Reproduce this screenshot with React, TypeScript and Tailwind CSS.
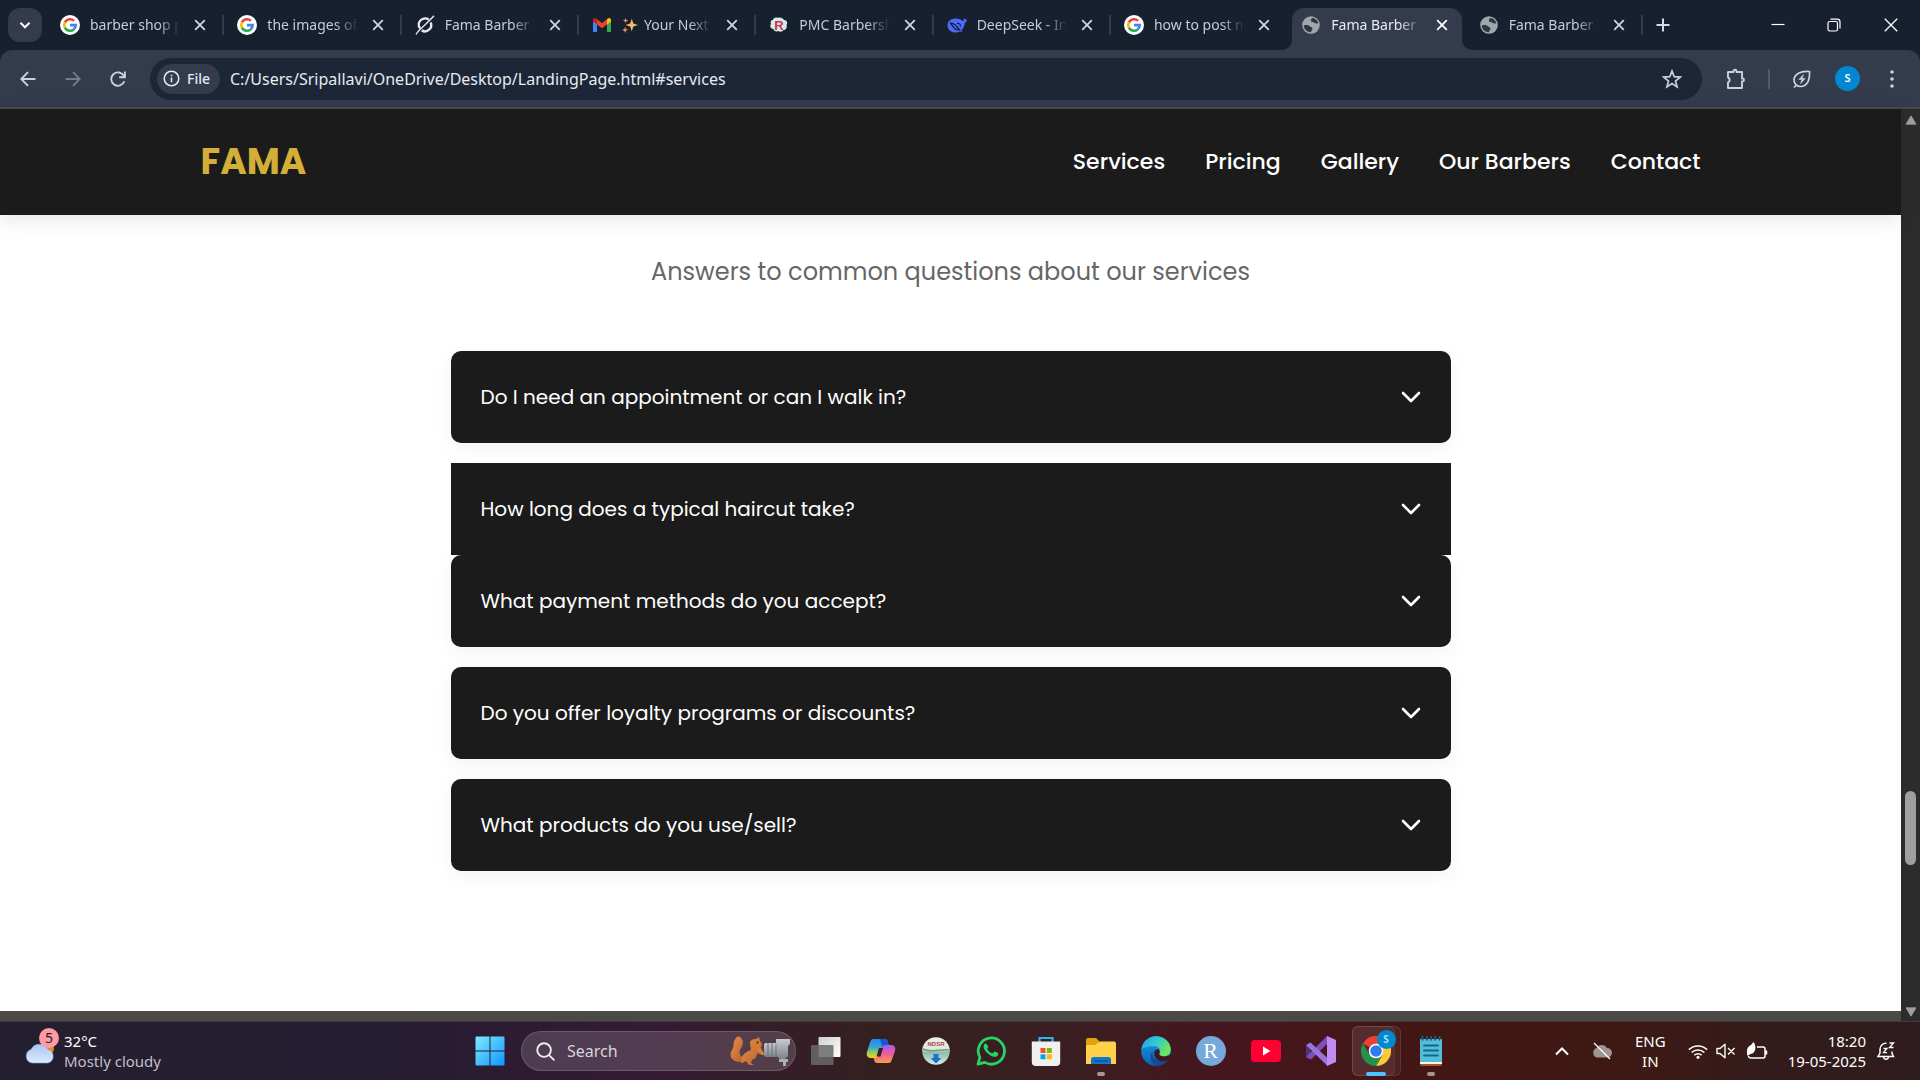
import React, { useState } from "react";

type IconProps = { className?: string };

const GoogleIcon = () => (
  <svg viewBox="0 0 20 20" className="size-5">
    <circle cx="10" cy="10" r="10" fill="#fff" />
    <g fill="none" strokeWidth="2.6">
      <path d="M4.9 7.4A5.7 5.7 0 0 1 14 5.9" stroke="#ea4335" />
      <path d="M4.9 12.6a5.7 5.7 0 0 1 0-5.2" stroke="#fbbc05" />
      <path d="M13.7 14.4a5.7 5.7 0 0 1-8.8-1.8" stroke="#34a853" />
      <path d="M10 10.1h5.7a5.7 5.7 0 0 1-2 4.3" stroke="#4285f4" />
    </g>
  </svg>
);

const SlashCircleIcon = () => (
  <svg viewBox="0 0 20 20" className="size-5" fill="none" stroke="#e8eaf0">
    <path d="M13.8 4.6A6.3 6.3 0 0 0 5 13.4" strokeWidth="2.4" />
    <path d="M15.7 7.5a6.3 6.3 0 0 1-9 7.9" strokeWidth="2.4" />
    <path d="M1 19.3C4 14 12 9 19 .8" strokeWidth="1.4" />
  </svg>
);

const GmailIcon = () => (
  <svg viewBox="0 0 20 20" className="size-5">
    <path d="M1 5v11.2c0 .5.4.9.9.9H5V8.6z" fill="#4285f4" />
    <path d="M19 5v11.2c0 .5-.4.9-.9.9H15V8.6z" fill="#34a853" />
    <path d="M15 4.2v5.2l4-3V5c0-2-2-2.7-3.3-1.5z" fill="#fbbc04" />
    <path d="M5 4.2v5.2l5 3.9 5-3.9V4.2L10 8z" fill="#ea4335" />
    <path d="M1 5v1.4l4 3V4.2l-.7-.7C3 2.3 1 3.2 1 5z" fill="#c5221f" />
  </svg>
);

const SparkleIcon = () => (
  <svg viewBox="0 0 18 18" className="size-4 shrink-0">
    <path d="M11 2l1.8 5.2L18 9l-5.2 1.8L11 16l-1.8-5.2L4 9l5.200-1.800z" fill="#fbb866" />
    <path d="M4 1l.8 2.200L7 4l-2.200.8L4 7l-.8-2.200L1 4l2.200-.8zM3.500 11l.9 2.600L7 14.500l-2.600.9L3.500 18l-.9-2.600L0 14.500l2.600-.9z" fill="#f0906a" />
  </svg>
);

const PmcIcon = () => (
  <svg viewBox="0 0 20 20" className="size-5">
    <path d="M4 5c0-2 3-3 5-2 2-1 5 0 6 2 3 0 4 3 2.500 5 1 3-1 5-3 5-1 2-4 2-5 1-2 1-5 0-5-2-3 0-4-3-2.500-5C1 7 2 5 4 5z" fill="#d3ece8" />
    <text x="10" y="15" textAnchor="middle" fontFamily="Liberation Sans" fontWeight="700" fontSize="13" fill="#d3304a">R</text>
  </svg>
);

const DeepSeekIcon = () => (
  <svg viewBox="0 0 20 20" className="size-5">
    <path d="M19.600 4.300c-1.600.4-2.200-.2-2.900-1.300-.4 1.600.1 2.700.2 3.300-1.300-.2-2.600-1.600-4-2.100-2.800-1.200-8-1.400-11 1.900C-.4 9 .4 13.600 3.200 15.800c2.700 2.200 6.800 2.300 9.700.7l2.700.6c-.4-.6-.9-1-1.300-1.500 2.500-2.100 3.300-5.200 3.400-7.500 1.400-.3 2.200-1.800 1.900-3.800z" fill="#4d6bfe" />
    <path d="M3.500 8.200c4-.6 6.200 3.600 9.200 6.600-3 .7-4.600-.6-6-2.200C5.500 11 4.500 9.500 3.500 8.200zM10 8.500c2.300-.6 3.500.6 3.500 3" fill="none" stroke="#17202f" strokeWidth="1.300" />
  </svg>
);

const GlobeIcon = () => (
  <svg viewBox="0 0 20 20" className="size-5">
    <circle cx="10" cy="10" r="8.800" fill="#a1a6ad" />
    <path d="M11 3c3 0 5.500 2 6.300 5-1.300.8-3 .6-4-.2-1-.9-2.800-.3-3.300-1.500-.4-1.200.2-2.300 1-3.300z" fill="#2d3647" />
    <path d="M2.800 10.500c2-.8 4.700-.6 6 .8.8 1 2.500.8 2.700 2.200.2 1.300-1.200 1.700-1.500 3.700-3.800 0-7-2.700-7.200-6.700z" fill="#2d3647" />
  </svg>
);

const CloseIcon = ({ className }: IconProps) => (
  <svg viewBox="0 0 12 12" className={className} fill="none" stroke="currentColor" strokeWidth="1.800">
    <path d="M1.200 1.200l9.600 9.600M10.800 1.200l-9.600 9.600" />
  </svg>
);

const tabs = [
  { title: "barber shop p", icon: <GoogleIcon /> },
  { title: "the images of", icon: <GoogleIcon /> },
  { title: "Fama Barber S", icon: <SlashCircleIcon /> },
  { title: "Your Next", icon: <GmailIcon />, sparkle: true },
  { title: "PMC Barbersh", icon: <PmcIcon /> },
  { title: "DeepSeek - In", icon: <DeepSeekIcon /> },
  { title: "how to post m", icon: <GoogleIcon /> },
  { title: "Fama Barber S", icon: <GlobeIcon />, active: true },
  { title: "Fama Barber S", icon: <GlobeIcon /> },
];

function TabStrip() {
  return (
    <div className="flex h-[50px] bg-[#17202f]">
      <div className="w-[47px] shrink-0 pl-2 pt-2">
        <button aria-label="Search tabs" className="flex h-[34px] w-[34px] items-center justify-center rounded-xl bg-[#333b4c] text-white">
          <svg viewBox="0 0 12 12" className="size-3" fill="none" stroke="currentColor" strokeWidth="2"><path d="M1.500 3.800L6 8.300l4.500-4.500" /></svg>
        </button>
      </div>
      <div className="flex min-w-0 flex-1">
        {tabs.map((t, i) => (
          <div key={i} className="relative flex min-w-0 flex-1 items-center pl-[13px] pr-3">
            {t.active && (
              <div className="absolute inset-x-1 bottom-0 top-2 rounded-t-xl bg-[#333b4c]">
                <svg viewBox="0 0 10 10" className="absolute -left-2.5 bottom-0 size-2.5"><path d="M10 0v10H0A10 10 0 0 0 10 0z" fill="#333b4c" /></svg>
                <svg viewBox="0 0 10 10" className="absolute -right-2.5 bottom-0 size-2.5"><path d="M0 0v10h10A10 10 0 0 1 0 0z" fill="#333b4c" /></svg>
              </div>
            )}
            <span className="relative shrink-0">{t.icon}</span>
            <span className={`relative ml-2.5 flex min-w-0 flex-1 items-center gap-1.5 overflow-hidden whitespace-nowrap text-[14px] leading-5 [mask-image:linear-gradient(to_right,#000_75%,transparent)] ${t.active ? "text-[#e6eaf3]" : "text-[#c3cbdc]"}`}>
              {t.sparkle && <SparkleIcon />}
              {t.title}
            </span>
            <button aria-label={`Close ${t.title}`} className={`relative ml-2 flex size-6 shrink-0 items-center justify-center ${t.active ? "text-white" : "text-[#ced5e4]"}`}>
              <CloseIcon className="size-3" />
            </button>
            {i !== 6 && i !== 7 && <span className="absolute right-0 top-[15px] h-5 w-0.5 bg-[#333b4c]" />}
          </div>
        ))}
      </div>
      <div className="flex w-[277px] shrink-0 items-center justify-between text-white">
        <button aria-label="New tab" className="flex h-8 w-10 items-center justify-center text-[#d5dbe8]">
          <svg viewBox="0 0 14 14" className="size-3.5" stroke="currentColor" strokeWidth="2"><path d="M7 .5v13M.5 7h13" /></svg>
        </button>
        <div className="flex h-full">
          <button aria-label="Minimize" className="flex w-14 items-center justify-center">
            <svg viewBox="0 0 14 14" className="size-3.5" stroke="currentColor" strokeWidth="1.200"><path d="M.5 6.500h13" /></svg>
          </button>
          <button aria-label="Restore" className="flex w-14 items-center justify-center">
            <svg viewBox="0 0 14 14" className="size-3.5" fill="none" stroke="currentColor" strokeWidth="1.200"><rect x="1" y="3.500" width="9.500" height="9.500" rx="1.800" /><path d="M3.500 1.200h6.700a2.800 2.800 0 0 1 2.800 2.800v6.500" /></svg>
          </button>
          <button aria-label="Close window" className="flex w-[58px] items-center justify-center">
            <svg viewBox="0 0 14 14" className="size-3.5" fill="none" stroke="currentColor" strokeWidth="1.300"><path d="M.8.8l12.400 12.400M13.200.8L.8 13.200" /></svg>
          </button>
        </div>
      </div>
    </div>
  );
}

function Toolbar() {
  return (
    <div className="bg-[#17202f]">
      <div className="flex h-[59px] items-center rounded-t-xl border-b-2 border-[#454851] bg-[#333b4c] text-[#c9d1e3]">
        <div className="flex w-[150px] shrink-0 items-center pl-[5px]">
          <button aria-label="Back" className="flex h-8 w-[45px] items-center justify-center">
            <svg viewBox="0 0 16 16" className="size-4" fill="none" stroke="currentColor" strokeWidth="1.900"><path d="M15.500 8H1.500M8 1.200L1.300 8 8 14.800" /></svg>
          </button>
          <button aria-label="Forward" className="flex h-8 w-[45px] items-center justify-center text-[#737b8d]">
            <svg viewBox="0 0 16 16" className="size-4" fill="none" stroke="currentColor" strokeWidth="1.900"><path d="M.5 8h14M8 1.200L14.700 8 8 14.800" /></svg>
          </button>
          <button aria-label="Reload" className="flex h-8 w-[45px] items-center justify-center">
            <svg viewBox="0 0 16 16" className="size-4" fill="none" stroke="currentColor" strokeWidth="1.900"><path d="M14.300 10.300A6.700 6.700 0 1 1 14 5.200M14.900 .6v5.600H9.200" /></svg>
          </button>
        </div>
        <div className="flex h-[42px] min-w-0 flex-1 items-center rounded-full bg-[#1d2636] pl-[7px]">
          <button className="flex h-[30px] w-[63px] shrink-0 items-center gap-[7px] rounded-full bg-[#333b4c] pl-1.5 text-[14px] font-medium text-[#e6eaf3]">
            <svg viewBox="0 0 18 18" className="size-[17px]" fill="none" stroke="currentColor" strokeWidth="1.600"><circle cx="9" cy="9" r="7.700" /><path d="M9 8v5M9 5v1.700" /></svg>
            File
          </button>
          <input aria-label="Address" defaultValue="C:/Users/Sripallavi/OneDrive/Desktop/LandingPage.html#services" className="ml-2.5 min-w-0 flex-1 bg-transparent text-[16px] text-[#e6eaf3] outline-none" />
          <button aria-label="Bookmark this tab" className="mr-4 flex size-7 items-center justify-center">
            <svg viewBox="0 0 20 20" className="size-5" fill="none" stroke="currentColor" strokeWidth="1.700"><path d="M10 2l2.200 5.700 6 .4-4.700 3.900 1.600 5.900L10 14.600l-5.100 3.300L6.500 12 1.800 8.100l6-.4z" /></svg>
          </button>
        </div>
        <div className="flex w-[218px] shrink-0 items-center pl-5">
          <button aria-label="Extensions" className="flex size-7 items-center justify-center">
            <svg viewBox="0 0 22 22" className="size-[22px]" fill="none" stroke="currentColor" strokeWidth="1.900"><path d="M3 4h5.500V3.300a1.500 1.500 0 0 1 3 0V4H17v6.500h.5a1.500 1.500 0 0 1 0 3H17V20H3v-5.500a2.700 2.700 0 0 0 0-5z" strokeLinejoin="round" /></svg>
          </button>
          <span className="ml-[18px] h-5 w-0.5 bg-[#505a6e]" />
          <button aria-label="Energy saver" className="ml-[18px] flex size-7 items-center justify-center">
            <svg viewBox="0 0 20 20" className="size-5" fill="none" stroke="currentColor" strokeWidth="1.700"><path d="M17.500 2.500C9 1.500 2 5 2 11c0 3.500 3 6.500 6.500 6.500 6.500 0 9.500-6 9-15zM2 18.500l2.800-2.800" /><path d="M11.500 5.500l-4.700 5h3l-1.300 4.200 4.700-5.200h-3z" fill="currentColor" strokeWidth=".5" /></svg>
          </button>
          <button aria-label="Profile" className="ml-[19px] flex size-[25px] items-center justify-center rounded-full bg-[#0288d1] text-[11px] font-semibold text-white">S</button>
          <button aria-label="Menu" className="ml-[18px] flex size-7 items-center justify-center">
            <svg viewBox="0 0 4 20" className="h-5 w-1" fill="currentColor"><circle cx="2" cy="3" r="1.800" /><circle cx="2" cy="10" r="1.800" /><circle cx="2" cy="17" r="1.800" /></svg>
          </button>
        </div>
      </div>
    </div>
  );
}

const questions = [
  "Do I need an appointment or can I walk in?",
  "How long does a typical haircut take?",
  "What payment methods do you accept?",
  "Do you offer loyalty programs or discounts?",
  "What products do you use/sell?",
];

function Page() {
  const [selected, setSelected] = useState(1);
  return (
    <div className="min-w-0 flex-1 bg-white font-['Poppins','Inter',sans-serif]">
      <header className="relative flex h-[106px] items-center justify-center bg-[#1b1b1b] shadow-[0_5px_20px_rgba(0,0,0,0.1)]">
        <div className="flex w-full max-w-[1500px] items-center justify-between">
          <a href="#home" className="text-[36px] font-bold leading-10 text-[#d4af37]">FAMA</a>
          <nav className="flex gap-10 text-[22px] font-medium leading-8 text-white">
            {["Services", "Pricing", "Gallery", "Our Barbers", "Contact"].map((n) => (
              <a key={n} href={`#${n.toLowerCase().replace(" ", "-")}`}>{n}</a>
            ))}
          </nav>
        </div>
      </header>
      <main className="pt-10">
        <p className="text-center text-[24px] leading-[34px] text-[#666]">Answers to common questions about our services</p>
        <div className="mx-auto mt-[62px] flex w-full max-w-[1000px] flex-col pb-[120px]">
          {questions.map((q, i) => (
            <button
              key={q}
              onClick={() => setSelected(i)}
              className={`flex h-[92px] items-center justify-between bg-[#1b1b1b] px-[30px] text-left text-[20px] text-white ${selected === i ? "" : "mb-5 rounded-[10px] shadow-[0_5px_20px_rgba(0,0,0,0.05)]"}`}
            >
              {q}
              <svg viewBox="0 0 20 12" className="h-3 w-5" fill="none" stroke="currentColor" strokeWidth="2.600" strokeLinecap="round" strokeLinejoin="round"><path d="M2 2l8 8 8-8" /></svg>
            </button>
          ))}
        </div>
      </main>
    </div>
  );
}

function Scrollbar() {
  return (
    <div className="flex w-[19px] shrink-0 flex-col items-center bg-[#2c2c2c]">
      <svg viewBox="0 0 14 12" className="mt-1.5 h-2.5 w-3.5"><path d="M7 1l6 10H1z" fill="#9f9f9f" stroke="#9f9f9f" strokeLinejoin="round" /></svg>
      <span className="grow-[665]" />
      <span className="h-[74px] w-[11px] rounded-full bg-[#9f9f9f]" />
      <span className="grow-[142]" />
      <svg viewBox="0 0 14 12" className="mb-1 h-2.5 w-3.5"><path d="M7 11l6-10H1z" fill="#9f9f9f" stroke="#9f9f9f" strokeLinejoin="round" /></svg>
    </div>
  );
}

const Squirrel = () => (
  <svg viewBox="0 0 62 32" className="h-8 w-[62px]">
    <defs>
      <linearGradient id="fur" x1="0" y1="0" x2="1" y2="1"><stop offset="0" stopColor="#e8924a" /><stop offset="1" stopColor="#b9602b" /></linearGradient>
      <linearGradient id="metal" x1="0" y1="0" x2="0" y2="1"><stop offset="0" stopColor="#c7cad0" /><stop offset="1" stopColor="#7d8289" /></linearGradient>
    </defs>
    <path d="M12 27C4 27-1 22 3 15c3-4 0-7 4-12 1-2 4-2 5 0 4 4 1 9-1 12-1 3 0 6 3 8z" fill="url(#fur)" />
    <path d="M12 28c-1-7 4-11 10-13l-1-7c0-3 3-4 6-4l3-2 1 4c2 2 3 4 1 6l-3 2 5 4-1 2-5-2c0 4-2 6-5 7l-1 3 3 2h-5l-3-4c-2 1-3 2-5 2z" fill="url(#fur)" />
    <path d="M30 10l6 10h-3l-6-5z" fill="#d97a36" />
    <circle cx="28.500" cy="7.500" r=".9" fill="#3a1c10" />
    <rect x="35" y="8" width="14" height="14" rx="2" fill="url(#metal)" />
    <path d="M39 8v14M43 8v14M47 9v12" stroke="#686d75" />
    <path d="M47 4h14v5l-2 2v10l-3 3h-5l-3-3V11l-1-2z" fill="url(#metal)" />
    <path d="M50 24h9v3h-2v4h-3v-4h-4z" fill="#aab0b8" />
  </svg>
);

const WindowsIcon = () => (
  <svg viewBox="0 0 30 30" className="size-[30px]">
    <defs><linearGradient id="win" x1="0" y1="0" x2="1" y2="1"><stop offset="0" stopColor="#7cecff" /><stop offset="1" stopColor="#0f95ff" /></linearGradient></defs>
    <path d="M.5 1.500a1 1 0 0 1 1-1h13v14H.5zM15.500.5h13a1 1 0 0 1 1 1v13h-14zM.5 15.500h14v14h-13a1 1 0 0 1-1-1zM15.500 15.500h14v13a1 1 0 0 1-1 1h-13z" fill="url(#win)" />
  </svg>
);

const apps: { name: string; running?: boolean; active?: boolean; icon: React.ReactNode }[] = [
  { name: "Task View", icon: (
    <svg viewBox="0 0 30 30" className="size-[30px]"><defs><linearGradient id="tv" x1="0" y1="0" x2="1" y2="1"><stop offset="0" stopColor="#d0d0d0" /><stop offset="1" stopColor="#fff" /></linearGradient></defs><rect x="7.500" y="1" width="22" height="20" rx="1" fill="url(#tv)" /><rect x="0" y="9" width="22.500" height="20" rx="1" fill="#6a6a6a" fillOpacity=".85" /></svg>
  ) },
  { name: "Copilot", icon: (
    <svg viewBox="0 0 30 30" className="size-[30px]">
      <defs>
        <linearGradient id="cpA" x1="0" y1="0" x2="0" y2="1"><stop offset="0" stopColor="#2086f5" /><stop offset=".45" stopColor="#39a7d0" /><stop offset=".7" stopColor="#8ccf5a" /><stop offset="1" stopColor="#ffcb1f" /></linearGradient>
        <linearGradient id="cpB" x1="0" y1="0" x2="0" y2="1"><stop offset="0" stopColor="#9f5df0" /><stop offset=".5" stopColor="#ee5e9b" /><stop offset="1" stopColor="#ff9a4a" /></linearGradient>
      </defs>
      <path d="M7.500 3h11c2.500 0 3 1.500 3.600 4l.5 2h-3.500c-2 0-2.800 1-3.300 3l-2 7c-.6 2-1.400 3-3.600 3H5c-3.500 0-5-2.500-4-6L4 6.500C4.700 4 5.700 3 7.500 3z" fill="url(#cpA)" />
      <path d="M22.500 27h-11c-2.500 0-3-1.500-3.600-4l-.4-1h3c2 0 2.800-1 3.400-3l2-7c.6-2 1.400-3 3.600-3H25c3.500 0 5 2.500 4 6l-3 8.500c-.7 2.500-1.700 3.500-3.500 3.500z" fill="url(#cpB)" />
      <path d="M14 3h5c2 0 2.600 1.500 3.200 4l.5 2h-3.500c-1.500 0-2.500.6-3 2z" fill="#1459d8" />
      <path d="M13 12h4l-2.500 8.500h-4z" fill="#3a1f26" />
    </svg>
  ) },
  { name: "Downloader", icon: (
    <svg viewBox="0 0 30 30" className="size-[30px]"><defs><linearGradient id="gl" x1="0" y1="0" x2="0" y2="1"><stop offset="0" stopColor="#f2eeea" /><stop offset=".45" stopColor="#dfe6df" /><stop offset=".55" stopColor="#8bbcae" /><stop offset="1" stopColor="#d8eaec" /></linearGradient></defs><circle cx="15" cy="15" r="13.800" fill="url(#gl)" /><path d="M2 13c8 4 18 0 26 1" stroke="#6f9f75" fill="none" strokeWidth="1.500" /><text x="15" y="10" textAnchor="middle" fontFamily="Liberation Sans" fontWeight="700" fontSize="6" fill="#a54545">NDSR</text><path d="M12.500 18h5v4h3L15 27.500 9.500 22h3z" fill="#1d72c9" /></svg>
  ) },
  { name: "WhatsApp", icon: (
    <svg viewBox="0 0 30 30" className="size-[30px]"><path d="M2 28.200l1.900-6.800A13.100 13.100 0 1 1 8.800 26.400z" fill="none" stroke="#25d366" strokeWidth="2.800" strokeLinejoin="round" /><path d="M10.800 8.200c-.5-.9-1.900-.8-2.600.2-2.200 3.100 1.500 7.500 4.500 9.800 3.500 2.700 7.500 3.800 9.200 1 .7-1.300.5-2-.3-2.400l-2.700-1.300c-.9-.4-1.300 1.600-2.300 1.800-2 .1-4.800-2.700-5.300-4.500-.1-.7 1.300-1.300 1-2.100z" fill="#25d366" /></svg>
  ) },
  { name: "Microsoft Store", icon: (
    <svg viewBox="0 0 30 30" className="size-[30px]"><path d="M8.500 6V2h13v4" fill="none" stroke="#2cb4ee" strokeWidth="2.200" /><path d="M.8 5.500h28.400V26a4 4 0 0 1-4 4H4.800a4 4 0 0 1-4-4z" fill="#f0f0f1" /><path d="M9.500 12h5v5h-5z" fill="#f25022" /><path d="M15.800 12h5v5h-5z" fill="#7fba00" /><path d="M9.500 18.300h5v5h-5z" fill="#00a4ef" /><path d="M15.800 18.300h5v5h-5z" fill="#ffb900" /></svg>
  ) },
  { name: "File Explorer", running: true, icon: (
    <svg viewBox="0 0 30 30" className="size-[30px]"><path d="M0 4a2 2 0 0 1 2-2h8l4 4-4 4H0z" fill="#e3a10b" /><path d="M0 9h9l5-3.500h14a2 2 0 0 1 2 2V28H0z" fill="#ffd04a" /><path d="M5 28v-4.500a2.500 2.500 0 0 1 2.500-2.500h15a2.500 2.500 0 0 1 2.500 2.500V28z" fill="#1276cf" /><path d="M8 25h14" stroke="#0c4f94" strokeWidth="1.300" /></svg>
  ) },
  { name: "Edge", icon: (
    <svg viewBox="0 0 30 30" className="size-[30px]">
      <defs><linearGradient id="edA" x1="0" y1="0" x2="1" y2=".5"><stop offset="0" stopColor="#1f9fe0" /><stop offset=".5" stopColor="#33c6d8" /><stop offset="1" stopColor="#6fe65a" /></linearGradient><linearGradient id="edB" x1="0" y1="0" x2="0" y2="1"><stop offset="0" stopColor="#1b9de2" /><stop offset="1" stopColor="#0b62b8" /></linearGradient></defs>
      <circle cx="15" cy="15" r="14.800" fill="url(#edB)" />
      <path d="M.5 13C2 5 8 .2 15 .2c8 0 14.800 6 14.800 13 0 4.500-3 7-7 7-3 0-5.300-1.200-4.500-2.800 2.300-4-1-7.400-5.300-7.400C6 10 1 13 .5 13z" fill="url(#edA)" />
      <path d="M12 15c-2 5 2 10.500 9 10.500 3 0 5-1 6.800-2.200C25 27.500 20.500 30 15.500 29.800 9 28 8 19 12 15z" fill="#124a93" />
      <path d="M13.500 15.500c1-2 3.500-3.200 5-.8 1 2-1 3.200 0 4.300 1.600 1.700 6 2.200 11.500-.6v4.600c-2 1.600-6.600 3-10 2.400-5-1-8-6-6.500-9.900z" fill="#3f1820" />
    </svg>
  ) },
  { name: "R", icon: (
    <span className="flex size-[30px] items-center justify-center rounded-full bg-[#75a9da] font-['Liberation_Serif',serif] text-[22px] leading-none text-white">R</span>
  ) },
  { name: "YouTube", icon: (
    <svg viewBox="0 0 30 22" className="h-[22px] w-[30px]"><rect width="30" height="22" rx="4" fill="#ff0033" /><path d="M12 6.500l7.500 4.500-7.500 4.500z" fill="#fff" /></svg>
  ) },
  { name: "Visual Studio", icon: (
    <svg viewBox="0 0 30 30" className="size-[30px]"><path d="M0 9l4.500-2.500v17L0 21z" fill="#52307c" /><path d="M0 21L21 0v8L5 23.500z" fill="#7a50bd" /><path d="M4.500 6.500l17 15.500v8L0 9z" fill="#9a73d8" /><path d="M21 0l9 4v22l-9 4z" fill="#c18cf2" /></svg>
  ) },
  { name: "Chrome", active: true, icon: (
    <span className="relative">
      <svg viewBox="0 0 30 30" className="size-[30px]"><path d="M15 15L2 7.500A15 15 0 0 1 28 7.500H15z" fill="#ea4335" /><path d="M15 7.500h13A15 15 0 0 1 15 30l6.500-11.200z" fill="#fcc934" /><path d="M21.500 18.800L15 30A15 15 0 0 1 2 7.500l6.500 11.300z" fill="#24924a" /><circle cx="15" cy="15" r="7.300" fill="#fff" /><circle cx="15" cy="15" r="5.800" fill="#2f7bea" /></svg>
      <span className="absolute -right-[5px] -top-1.5 flex size-[19px] items-center justify-center rounded-full bg-[#0288d1] text-[10px] font-bold text-[#a9dcf7]">S</span>
    </span>
  ) },
  { name: "Notepad", running: true, icon: (
    <svg viewBox="0 0 30 30" className="size-[30px]"><path d="M4 26h22v2a2 2 0 0 1-2 2H6a2 2 0 0 1-2-2z" fill="#a8561f" /><path d="M4 3h22v25H4z" fill="#f4f4f4" /><path d="M4 3h22v23H4z" fill="#55bdd9" /><path d="M8 9.500h14M8 14.500h14M8 19.500h14" stroke="#0c6b8c" strokeWidth="1.800" strokeLinecap="round" /><path d="M6.500.800v3M10.800.800v3M15 .800v3M19.200.800v3M23.500.800v3" stroke="#14607a" strokeWidth="2" strokeLinecap="round" /></svg>
  ) },
];

function Taskbar() {
  return (
    <footer className="grid h-[59px] grid-cols-[1fr_auto_1fr] items-center border-t border-[#45393c] bg-[linear-gradient(to_right,#241f2e_0%,#251d32_20%,#351a33_34%,#35201f_46%,#3b1e22_56%,#461620_64%,#421713_75%,#3e1913_84%,#341b1b_92%,#2e1b1e_100%)] text-white">
      <button className="flex items-center gap-1 pl-6 text-left text-[15px] leading-5">
        <svg viewBox="0 0 36 38" className="mb-2 h-[38px] w-9">
          <defs><linearGradient id="cl" x1="0" y1="0" x2="0" y2="1"><stop offset="0" stopColor="#a9c6f5" /><stop offset="1" stopColor="#dbe9fd" /></linearGradient></defs>
          <circle cx="23" cy="20" r="7" fill="#f28a1c" />
          <path d="M8 35a7 7 0 0 1-1-13.500A9.500 9.500 0 0 1 24 21.500 7 7 0 0 1 24 35z" fill="url(#cl)" stroke="#7ea4e6" strokeWidth=".6" />
          <circle cx="25" cy="10" r="10" fill="#ff99a4" />
          <text x="25" y="15" textAnchor="middle" fontFamily="Noto Sans" fontSize="14" fill="#222">5</text>
        </svg>
        <span className="flex flex-col"><span>32°C</span><span className="text-[#c3bfc6]">Mostly cloudy</span></span>
      </button>
      <div className="flex items-center">
        <button aria-label="Start" className="flex h-[50px] w-[55px] items-center justify-center"><WindowsIcon /></button>
        <label className="ml-1 mr-0.5 flex h-10 w-[275px] items-center rounded-full border border-white/15 bg-white/15 pl-3.5 pr-1">
          <svg viewBox="0 0 20 20" className="size-[19px] shrink-0" fill="none" stroke="#f1edf2" strokeWidth="1.900" strokeLinecap="round"><circle cx="8.500" cy="8.500" r="7.200" /><path d="M13.800 13.800l5 5" /></svg>
          <input aria-label="Search" placeholder="Search" className="ml-3 min-w-0 flex-1 bg-transparent text-[16px] outline-none placeholder:text-[#ddd3dc]" />
          <Squirrel />
        </label>
        {apps.map((a) => (
          <button key={a.name} aria-label={a.name} className="relative flex h-[50px] w-[55px] items-center justify-center">
            {a.active && <span className="absolute inset-y-0 left-1 right-0.5 rounded-md border border-white/10 bg-white/5" />}
            {a.active && <span className="absolute inset-y-0 left-1 right-2 rounded-md border border-white/5 bg-white/5" />}
            {a.icon}
            {a.running && <span className="absolute bottom-0 h-1 w-2 rounded-full bg-[#a89597]" />}
            {a.active && <span className="absolute bottom-0 h-1 w-5 rounded-full bg-[#4cc2ff]" />}
          </button>
        ))}
      </div>
      <div className="flex items-center justify-end pr-6 text-[15px] leading-5">
        <button aria-label="Show hidden icons" className="mr-[22px]">
          <svg viewBox="0 0 14 10" className="h-2.5 w-3.5" fill="none" stroke="#fff" strokeWidth="2"><path d="M1 8.500l6-6 6 6" /></svg>
        </button>
        <svg viewBox="0 0 22 18" className="mr-[22px] h-[18px] w-[22px] shrink-0"><path d="M6 15.500a5 5 0 0 1-.5-9.500A6 6 0 0 1 16 6a4.700 4.700 0 0 1 .5 9.500z" fill="#a19392" /><path d="M3 1l16 16" stroke="#fff" strokeWidth="1.300" /></svg>
        <button className="mr-[22px] text-center">ENG<br />IN</button>
        <svg viewBox="0 0 22 18" className="mr-2 h-[18px] w-5" fill="none" stroke="#fff" strokeWidth="1.700"><path d="M1 7.500a14.300 14.300 0 0 1 20 0M4 10.700a10 10 0 0 1 14 0M7 13.700a5.700 5.700 0 0 1 8 0" /><circle cx="11" cy="16" r="1.700" fill="#fff" stroke="none" /></svg>
        <svg viewBox="0 0 20 16" className="mr-2.5 h-4 w-5" fill="none" stroke="#fff" strokeWidth="1.400"><path d="M1 5.500h3L9 1.200v13.600l-5-4.300H1zM12 5l6.500 6.500M18.500 5L12 11.500" strokeLinejoin="round" /></svg>
        <svg viewBox="0 0 22 18" className="mr-5 h-[18px] w-[22px]" fill="none" stroke="#fff" strokeWidth="1.500"><path d="M11 5h6a2 2 0 0 1 2 2v7a2 2 0 0 1-2 2H5c-1.500 0-2.300-.8-2.500-2M20.500 8.500v4" /><path d="M7.500 0c3 4 2.500 9-1 11.500l-2 .5-3 2C0 8 1.500 4.500 5 3z" fill="#fff" stroke="none" /></svg>
        <button className="mr-2.5 text-right">18:20<br />19-05-2025</button>
        <svg viewBox="0 0 20 20" className="size-5" fill="none" stroke="#fff" strokeWidth="1.500"><path d="M10.500 2.200A6 6 0 0 0 4 8v4l-2 3.500h15.500L16 12.500v-2M7.500 16c.5 3 4.500 3 5 0" /><path d="M7.500 7.500H11l-3.500 4.200H11M13.500 2h4L13.500 6.500h4" strokeWidth="1.300" /></svg>
      </div>
    </footer>
  );
}

export default function App() {
  return (
    <div className="flex min-h-screen flex-col bg-[#4b4946] font-['Segoe_UI','Noto_Sans',sans-serif]">
      <TabStrip />
      <Toolbar />
      <div className="flex flex-1">
        <div className="flex min-w-0 flex-1 flex-col pb-2.5"><Page /></div>
        <Scrollbar />
      </div>
      <Taskbar />
    </div>
  );
}
